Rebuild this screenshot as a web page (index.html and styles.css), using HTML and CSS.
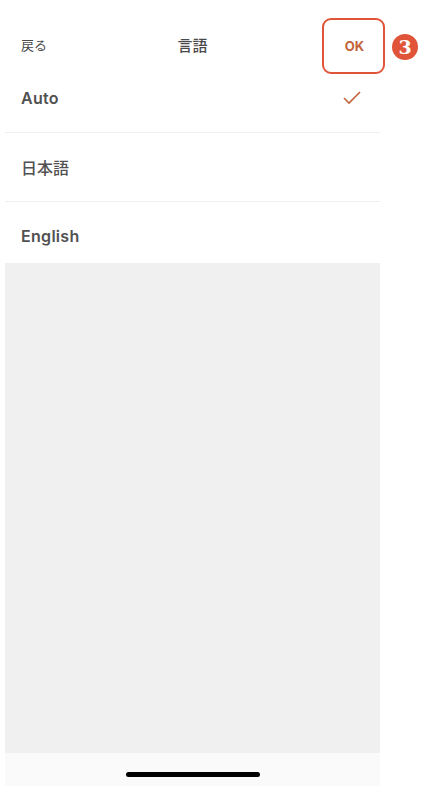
FILE: index.html
```html
<!DOCTYPE html>
<html lang="ja">
<head>
<meta charset="utf-8">
<link rel="stylesheet" href="styles.css">
</head>
<body>
<div class="page">
  <div class="screen">
    <header class="nav">
      <span class="back">戻る</span>
      <span class="title">言語</span>
      <span class="ok">OK</span>
    </header>
    <ul class="list">
      <li class="row">
        <span>Auto</span>
        <svg class="check" width="18" height="14" viewBox="0 0 18 14"><polyline points="1,7 6,12 17,1" fill="none" stroke="#c2633b" stroke-width="1.6"/></svg>
      </li>
      <li class="row jp">日本語</li>
      <li class="row last">English</li>
    </ul>
    <div class="empty"></div>
    <div class="home-bar"><div class="indicator"></div></div>
  </div>
  <div class="highlight"></div>
  <div class="badge">3</div>
</div>
</body>
</html>
```
FILE: styles.css
```css
html, body {
  margin: 0;
  padding: 0;
  background: #ffffff;
}
.page {
  position: relative;
  width: 431px;
  height: 796px;
}
.screen {
  margin-left: 5px;
  width: 375px;
  height: 786px;
  display: flex;
  flex-direction: column;
  background: #ffffff;
  font-family: Inter, "Noto Sans CJK JP", sans-serif;
  color: #4f4f4f;
}
.nav {
  box-sizing: border-box;
  height: 64px;
  padding: 35px 16px 0 16px;
  display: grid;
  grid-template-columns: 1fr auto 1fr;
  align-items: start;
  line-height: 20px;
}
.back {
  font-size: 13px;
  color: #4a4a4a;
  font-family: "Noto Sans CJK JP", sans-serif;
}
.title {
  font-size: 15px;
  font-weight: 500;
  color: #4a4a4a;
  font-family: "Noto Sans CJK JP", sans-serif;
}
.ok {
  justify-self: end;
  font-size: 13px;
  font-weight: 700;
  color: #c2633b;
  margin-top: 1px;
}
.list {
  list-style: none;
  margin: 0;
  padding: 0;
}
.row {
  box-sizing: border-box;
  height: 69px;
  padding: 24px 19px 0 16px;
  line-height: 20px;
  font-size: 16px;
  font-weight: 600;
  letter-spacing: 0.3px;
  color: #515151;
  border-bottom: 1px solid #efefef;
  display: flex;
  justify-content: space-between;
  align-items: center;
  align-content: flex-start;
  flex-wrap: wrap;
}
.row.jp {
  font-family: "Noto Sans CJK JP", sans-serif;
  font-weight: 500;
  letter-spacing: 0;
}
.row.last {
  height: 61px;
  border-bottom: none;
}
.check {
  display: block;
}
.empty {
  flex: 1;
  background: #f0f0f0;
}
.home-bar {
  height: 33px;
  background: #fafafa;
  position: relative;
}
.indicator {
  position: absolute;
  left: 121px;
  top: 19px;
  width: 134px;
  height: 5px;
  border-radius: 3px;
  background: #000000;
}
.highlight {
  position: absolute;
  left: 322px;
  top: 18px;
  width: 63px;
  height: 56px;
  box-sizing: border-box;
  border: 2.5px solid #e0553a;
  border-radius: 9px;
}
.badge {
  position: absolute;
  left: 392px;
  top: 34px;
  width: 26px;
  height: 26px;
  border-radius: 50%;
  background: #e0553a;
  color: #ffffff;
  font-family: "DejaVu Serif", serif;
  font-weight: 700;
  font-size: 19px;
  line-height: 26px;
  text-align: center;
}
```
